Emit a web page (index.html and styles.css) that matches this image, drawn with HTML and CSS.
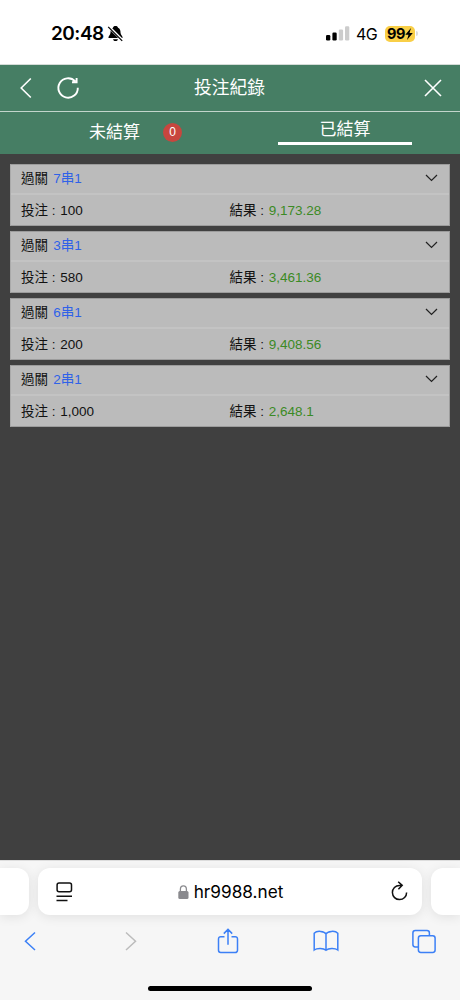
FILE: index.html
```html
<!DOCTYPE html>
<html lang="zh-Hant">
<head>
    <meta charset="UTF-8">
    <meta name="viewport" content="width=device-width, initial-scale=1">
    <title>投注紀錄</title>
    <link rel="stylesheet" href="styles.css">
</head>
<body>
    <div class="status">
        <span class="time">20:48</span>
        <svg class="bell" width="17" height="17" viewBox="0 0 17 17">
            <path d="M8.5 1C10 1 10.8 1.7 11 2.7C13 3.7 13.5 5.3 13.5 7.5C13.5 9.7 15.5 10.8 15.5 12.3V13H1.5V12.3C1.5 10.8 3.5 9.7 3.5 7.5C3.5 5.3 4 3.7 6 2.7C6.2 1.7 7 1 8.5 1Z"/>
            <path d="M6 14.2H11C10.6 15.5 9.7 16 8.5 16C7.3 16 6.4 15.5 6 14.2Z"/>
            <path d="M1.5 1.4L15.8 15.7" stroke="#fff" stroke-width="2.8"/>
            <path d="M1.2 1.8L15.2 15.8" stroke="#000" stroke-width="1.2"/>
        </svg>
        <svg class="signal" width="24" height="15" viewBox="0 0 24 15">
            <rect x="0" y="9" width="4.3" height="5.5" rx="1.2"/>
            <rect x="6.4" y="6.5" width="4.3" height="8" rx="1.2"/>
            <rect x="12.8" y="3.5" width="4.3" height="11" rx="1.2" fill="#ccc"/>
            <rect x="19" y="0.3" width="4.3" height="14.2" rx="1.2" fill="#ccc"/>
        </svg>
        <span class="network">4G</span>
        <span class="battery">99<svg width="8" height="12" viewBox="0 0 8 12"><path d="M6 0L0.3 6.8H3.5L2 12L7.8 5H4.5Z"/></svg></span>
        <span class="battery-tip"></span>
    </div>

    <div class="header">
        <svg class="back" width="14" height="22" viewBox="0 0 14 22"><path d="M11.8 1.5L2.2 11L11.8 20.5"/></svg>
        <svg class="reload" width="24" height="24" viewBox="0 0 24 24"><path d="M21.8 11.7A9.7 9.7 0 1 1 19.2 5.4M20.6 2V6.2H16"/></svg>
        <h1>投注紀錄</h1>
        <svg class="close" width="18" height="18" viewBox="0 0 18 18"><path d="M1 1L17 17M17 1L1 17"/></svg>
    </div>

    <div class="tabs">
        <div class="tab"><span class="label">未結算</span><span class="badge">0</span></div>
        <div class="tab active"><span class="label">已結算</span></div>
    </div>

    <div class="list">
        <div class="card">
            <div class="row top">
                <span>過關 <b>7串1</b></span>
                <svg width="13" height="8" viewBox="0 0 13 8"><path d="M1 1L6.5 6.5L12 1"/></svg>
            </div>
            <div class="row">
                <span>投注 : <i>100</i></span>
                <span>結果 : <em>9,173.28</em></span>
            </div>
        </div>
        <div class="card">
            <div class="row top">
                <span>過關 <b>3串1</b></span>
                <svg width="13" height="8" viewBox="0 0 13 8"><path d="M1 1L6.5 6.5L12 1"/></svg>
            </div>
            <div class="row">
                <span>投注 : <i>580</i></span>
                <span>結果 : <em>3,461.36</em></span>
            </div>
        </div>
        <div class="card">
            <div class="row top">
                <span>過關 <b>6串1</b></span>
                <svg width="13" height="8" viewBox="0 0 13 8"><path d="M1 1L6.5 6.5L12 1"/></svg>
            </div>
            <div class="row">
                <span>投注 : <i>200</i></span>
                <span>結果 : <em>9,408.56</em></span>
            </div>
        </div>
        <div class="card">
            <div class="row top">
                <span>過關 <b>2串1</b></span>
                <svg width="13" height="8" viewBox="0 0 13 8"><path d="M1 1L6.5 6.5L12 1"/></svg>
            </div>
            <div class="row">
                <span>投注 : <i>1,000</i></span>
                <span>結果 : <em>2,648.1</em></span>
            </div>
        </div>
    </div>

    <div class="browser">
        <div class="pills">
            <div class="pill side-left"></div>
            <div class="pill address">
                <svg class="reader" width="17" height="20" viewBox="0 0 17 20"><rect x="1.1" y="1" width="14.4" height="8.8" rx="2"/><path d="M0.5 14.2H16M0.5 18.6H11.5"/></svg>
                <span class="url">
                    <svg width="11" height="14" viewBox="0 0 11 14"><rect x="0.3" y="6" width="10.2" height="8" rx="1.5" fill="#8a8a8e"/><path d="M2.4 7V4.2A3 3.3 0 0 1 8.4 4.2V7" fill="none" stroke="#8a8a8e" stroke-width="1.3"/></svg>
                    hr9988.net
                </span>
                <svg class="refresh" width="17" height="20" viewBox="0 0 17 20"><path d="M10.8 4.4H8.4A7.1 7.1 0 1 0 15.6 11.4M7.2 0.8L11.2 4.4L7.4 8.2"/></svg>
            </div>
            <div class="pill side-right"></div>
        </div>
        <div class="toolbar">
            <svg width="26" height="26" viewBox="0 0 26 26"><path d="M18 4.5L8.5 13.2L18 22"/></svg>
            <svg class="disabled" width="26" height="26" viewBox="0 0 26 26"><path d="M10 4.5L19.5 13.2L10 22"/></svg>
            <svg width="26" height="26" viewBox="0 0 26 26"><path d="M10.5 8.7H6.7A2.2 2.2 0 0 0 4.5 10.9V22.3A2.2 2.2 0 0 0 6.7 24.5H21.3A2.2 2.2 0 0 0 23.5 22.3V10.9A2.2 2.2 0 0 0 21.3 8.7H17.5M14 16.7V1.7M9.8 5.6L14 1.4L18.2 5.6"/></svg>
            <svg width="26" height="26" viewBox="0 0 26 26"><path d="M13 6C11.5 3.2 4 2.2 1.2 5.2V22C4 20 10.5 20 13 22.3C15.5 20 22 20 24.8 22V5.2C22 2.2 14.5 3.2 13 6V22.3"/></svg>
            <svg width="26" height="26" viewBox="0 0 26 26"><path d="M7 19H4.3A2.4 2.4 0 0 1 1.9 16.6V4.9A2.4 2.4 0 0 1 4.3 2.5H16A2.4 2.4 0 0 1 18.4 4.9V7.7"/><rect x="7.4" y="7.7" width="16.7" height="16.7" rx="2.4"/></svg>
        </div>
        <div class="home-bar"></div>
    </div>
</body>
</html>
```

FILE: styles.css
```css
* { box-sizing: border-box; }
body { margin: 0; width: 460px; height: 1000px; display: flex; flex-direction: column; overflow: hidden; background: #404040; font-family: "Liberation Sans", Arial, "Noto Sans CJK TC", sans-serif; }
svg { display: block; flex: none; }

.status { height: 65px; flex: none; display: flex; align-items: center; padding: 3px 42px 0 51px; background: #fff; font-family: Inter, sans-serif; border-bottom: 1px solid #d5dcd8; }
.time { width: 56px; font-size: 19px; line-height: 24px; font-weight: 600; letter-spacing: -0.5px; }
.signal { margin-left: auto; margin-right: 6px; }
.network { width: 29px; font-size: 16px; letter-spacing: -0.5px; }
.battery { display: flex; align-items: center; justify-content: center; width: 30px; height: 16px; border-radius: 5px; background: #f9cf47; font-size: 14.5px; font-weight: 700; letter-spacing: -0.4px; }
.battery-tip { width: 2px; height: 5px; margin-left: 1px; border-radius: 0 2px 2px 0; background: #ddd; }

.header { height: 46px; flex: none; display: flex; align-items: center; padding: 0 18px 1px 19px; background: #467e64; color: #fff; }
.header svg { fill: none; stroke: #fff; stroke-width: 1.6; }
.header .reload { margin-left: 23px; stroke-width: 1.9; }
.header h1 { margin: 0 0 0 114px; font-size: 17.8px; line-height: 24px; font-weight: 400; }
.header .close { margin-left: auto; }

.tabs { height: 43px; flex: none; display: flex; background: #467e64; border-top: 1px solid #c3d5cc; color: #fff; }
.tab { width: 230px; display: flex; padding-left: 89px; font-size: 17px; line-height: 24px; }
.tab .label { margin-top: 9px; }
.badge { width: 19px; height: 19px; margin: 11px 0 0 23px; border-radius: 50%; background: #c8463e; font-size: 12px; line-height: 19px; text-align: center; }
.tab.active { padding: 0 0 0 48px; }
.tab.active .label { width: 134px; height: 28px; margin-top: 5px; padding-top: 1px; line-height: 23px; text-align: center; border-bottom: 3px solid #fff; }

.list { flex: 1; padding: 10px; display: flex; flex-direction: column; gap: 5px; }
.card { height: 62px; background: #bbb; border: 1px solid #9c9c9c; border-left-color: #aaa; font-size: 13.5px; color: #111; }
.row { height: 30px; display: flex; align-items: center; padding: 1px 11px 0 10px; }
.row span { width: 209px; white-space: pre; line-height: 20px; }
.row.top { justify-content: space-between; padding-top: 0; border-bottom: 2px solid #c3c3c3; }
.row.top svg { margin-top: -2px; fill: none; stroke: #222; stroke-width: 1.2; }
.row b { margin-left: 1.5px; font-weight: 400; color: #2f62e8; }
.row i { margin-left: 1px; font-style: normal; }
.row em { margin-left: 1px; font-style: normal; color: #3b8a25; }

.browser { height: 140px; flex: none; background: #f6f6f6; border-top: 1px solid #ddd; }
.pills { display: flex; gap: 9px; padding-top: 7px; }
.pill { height: 47px; background: #fff; border-radius: 12px; box-shadow: 0 2px 12px rgba(0, 0, 0, 0.09); }
.side-left { width: 29px; border-radius: 0 12px 12px 0; }
.side-right { width: 29px; border-radius: 12px 0 0 12px; }
.address { width: 384px; display: flex; align-items: center; justify-content: space-between; padding: 0 14px 0 18px; }
.address .reader, .address .refresh { fill: none; stroke: #111; stroke-width: 1.5; }
.address .refresh { margin-top: -2px; }
.url { display: flex; align-items: center; gap: 5px; margin-left: -3px; font-family: Inter, sans-serif; font-size: 17.2px; }
.toolbar { display: flex; justify-content: space-between; padding: 13px 23px 0 17px; }
.toolbar svg { fill: none; stroke: #3c80f6; stroke-width: 1.5; }
.toolbar .disabled { stroke: #bcbcbc; }
.home-bar { width: 164px; height: 5px; margin: 32px auto 0; border-radius: 3px; background: #000; }
```
